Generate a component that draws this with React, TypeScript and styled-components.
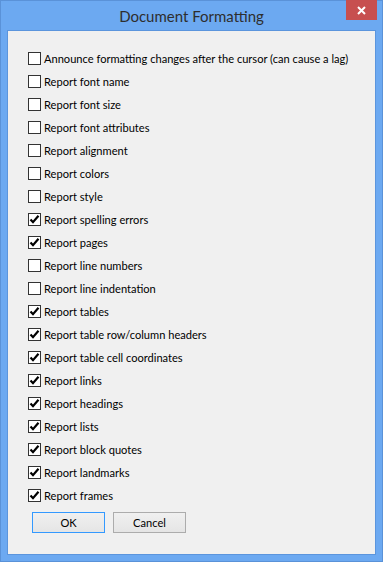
import React from "react";
import styled, { createGlobalStyle } from "styled-components";

const Global = createGlobalStyle`
  html, body { margin: 0; padding: 0; }
  body { width: 383px; height: 562px; overflow: hidden; font-family: "Lato", "Liberation Sans", sans-serif; }
`;

const Window = styled.div`
  width: 383px;
  height: 562px;
  box-sizing: border-box;
  background: #6ca9f1;
  border: 1px solid #5a92d8;
  display: flex;
  flex-direction: column;
`;

const TitleBar = styled.div`
  height: 29px;
  display: grid;
  grid-template-columns: 1fr auto 1fr;
  align-items: start;
`;

const Title = styled.div`
  grid-column: 2;
  font-family: "Lato", "Open Sans", sans-serif;
  font-size: 15px;
  color: #2e2e2e;
  line-height: 29px;
  padding-top: 1px;
`;

const CloseButton = styled.div`
  grid-column: 3;
  justify-self: end;
  width: 31px;
  height: 20px;
  margin-top: -1px;
  margin-right: 5px;
  background: #c74f4f;
  display: flex;
  align-items: center;
  justify-content: center;
`;

const Client = styled.div`
  flex: 1;
  margin: 0 6px 6px 6px;
  border: 1px solid #5b95dd;
  background: #f0f0f0;
  padding: 16px 20px 0 20px;
  display: flex;
  flex-direction: column;
`;

const Row = styled.label`
  height: 23px;
  display: flex;
  align-items: center;
  gap: 3px;
  white-space: nowrap;
  font-family: "Lato", "Liberation Sans", sans-serif;
  font-size: 11.1px;
  color: #000;
`;

const Box = styled.span`
  width: 13px;
  height: 13px;
  box-sizing: border-box;
  border: 1px solid #333;
  background: #fff;
  display: flex;
  align-items: center;
  justify-content: center;
  flex: none;
`;

const Buttons = styled.div`
  display: flex;
  gap: 8px;
  margin-top: 5px;
  padding-left: 4px;
`;

const Button = styled.div<{ $focused?: boolean }>`
  width: 73px;
  height: 21px;
  box-sizing: border-box;
  border: 1px solid ${(p) => (p.$focused ? "#3399ff" : "#acacac")};
  background: linear-gradient(#f0f0f0, #e5e5e5);
  display: flex;
  align-items: center;
  justify-content: center;
  font-family: "Lato", "Liberation Sans", sans-serif;
  font-size: 11.1px;
  color: #000;
`;

const items: [string, boolean][] = [
  ["Announce formatting changes after the cursor (can cause a lag)", false],
  ["Report font name", false],
  ["Report font size", false],
  ["Report font attributes", false],
  ["Report alignment", false],
  ["Report colors", false],
  ["Report style", false],
  ["Report spelling errors", true],
  ["Report pages", true],
  ["Report line numbers", false],
  ["Report line indentation", false],
  ["Report tables", true],
  ["Report table row/column headers", true],
  ["Report table cell coordinates", true],
  ["Report links", true],
  ["Report headings", true],
  ["Report lists", true],
  ["Report block quotes", true],
  ["Report landmarks", true],
  ["Report frames", true],
];

const Check = () => (
  <svg width="11" height="11" viewBox="0 0 11 11">
    <path d="M1.5 5.5 L4 8.2 L9.5 1.8" fill="none" stroke="#000" strokeWidth="2.2" />
  </svg>
);

export default function App() {
  return (
    <>
      <Global />
      <Window>
        <TitleBar>
          <Title>Document Formatting</Title>
          <CloseButton>
            <svg width="9" height="9" viewBox="0 0 9 9">
              <path d="M1 1 L8 8 M8 1 L1 8" stroke="#fff" strokeWidth="2" />
            </svg>
          </CloseButton>
        </TitleBar>
        <Client>
          {items.map(([label, checked]) => (
            <Row key={label}>
              <Box>{checked && <Check />}</Box>
              {label}
            </Row>
          ))}
          <Buttons>
            <Button $focused>OK</Button>
            <Button>Cancel</Button>
          </Buttons>
        </Client>
      </Window>
    </>
  );
}
